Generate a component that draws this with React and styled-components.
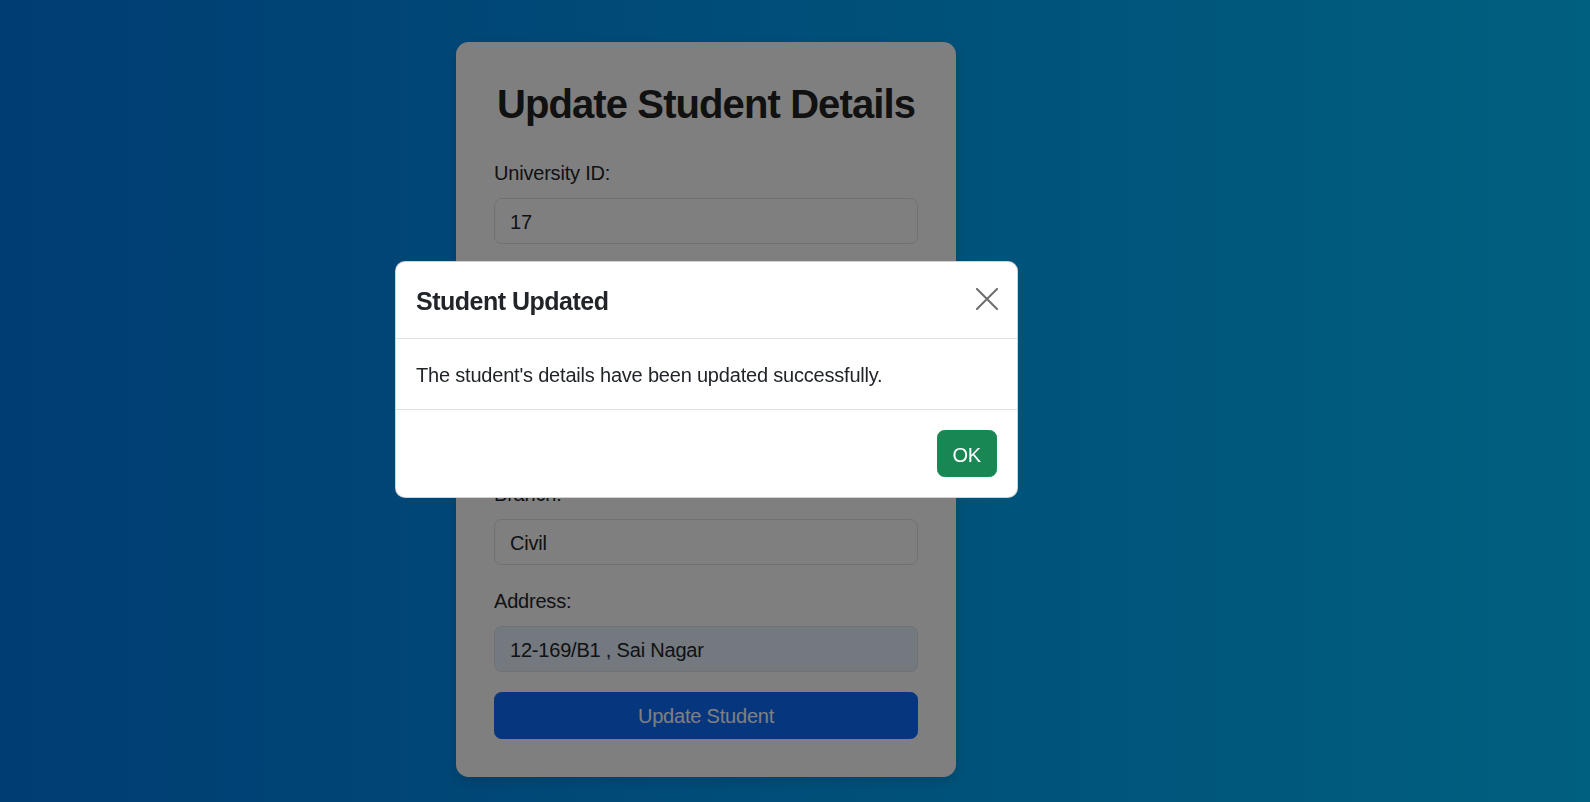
import React from "react";
import styled, { createGlobalStyle } from "styled-components";

const GlobalStyle = createGlobalStyle`
  html, body {
    margin: 0;
    padding: 0;
    height: 100%;
  }
  body {
    font-family: "Liberation Sans", Arial, sans-serif;
    color: #212529;
    letter-spacing: -0.2px;
  }
  * { box-sizing: border-box; }
`;

const Page = styled.div`
  min-height: 802px;
  background: linear-gradient(to right, #007ae6, #00c0ff);
  display: flex;
  justify-content: center;
  align-items: flex-start;
  padding: 42px 178px 0 0;
`;

const Card = styled.div`
  width: 500px;
  background: #ffffff;
  border-radius: 12.5px;
  padding: 37.5px 38px 38px;
  box-shadow: 0 4px 12px rgba(0, 0, 0, 0.15);
`;

const Heading = styled.h1`
  margin: 0 0 30px;
  font-size: 40px;
  line-height: 48px;
  font-weight: 700;
  letter-spacing: -0.9px;
  text-align: center;
  color: #222;
`;

const Form = styled.form`
  display: flex;
  flex-direction: column;
`;

const Field = styled.div`
  display: flex;
  flex-direction: column;
  margin-bottom: 21px;
`;

const Label = styled.label`
  font-size: 20px;
  line-height: 30px;
  margin-bottom: 10px;
`;

const Input = styled.input`
  height: 46px;
  padding: 9px 15px 5px;
  font-family: inherit;
  font-size: 20px;
  line-height: 30px;
  letter-spacing: -0.2px;
  color: #212529;
  background: ${(p) => (p.$autofill ? "#e8f0fe" : "#ffffff")};
  border: 1px solid #dee2e6;
  border-radius: 7.5px;
  outline: none;
`;

const SubmitButton = styled.button`
  height: 47px;
  margin-top: -0.5px;
  padding: 7px 15px;
  font-family: inherit;
  font-size: 20px;
  line-height: 30px;
  letter-spacing: -0.2px;
  color: #ffffff;
  background: #0d6efd;
  border: 1px solid #0d6efd;
  border-radius: 7.5px;
`;

const Backdrop = styled.div`
  position: fixed;
  inset: 0;
  background: rgba(0, 0, 0, 0.5);
  display: flex;
  justify-content: center;
  align-items: flex-start;
  padding: 260.5px 177px 0 0;
`;

const Dialog = styled.div`
  width: 623px;
  background: #ffffff;
  border: 1px solid rgba(0, 0, 0, 0.175);
  border-radius: 10px;
  display: flex;
  flex-direction: column;
`;

const DialogHeader = styled.div`
  display: flex;
  align-items: center;
  padding: 21px 20px 18px;
  border-bottom: 1px solid #dee2e6;
`;

const DialogTitle = styled.h5`
  margin: 0;
  font-size: 25px;
  line-height: 37.5px;
  font-weight: 700;
  letter-spacing: -0.5px;
  color: #212529;
`;

const CloseButton = styled.button`
  margin: -12px -10px -8px auto;
  width: 40px;
  height: 40px;
  padding: 0;
  border: 0;
  background: transparent;
  display: flex;
  align-items: center;
  justify-content: center;
  cursor: pointer;
`;

const DialogBody = styled.div`
  padding: 21px 20px 19px;
  font-size: 20px;
  line-height: 30px;
  color: #212529;
`;

const DialogFooter = styled.div`
  display: flex;
  justify-content: flex-end;
  padding: 15px;
  border-top: 1px solid #dee2e6;
`;

const OkButton = styled.button`
  margin: 5px;
  height: 47px;
  padding: 8px 15px 6px;
  font-family: inherit;
  font-size: 20px;
  line-height: 30px;
  letter-spacing: -0.2px;
  color: #ffffff;
  background: #198754;
  border: 1px solid #198754;
  border-radius: 7.5px;
`;

const fields = [
  { label: "University ID:", value: "17" },
  { label: "Name:", value: "Ravi Kumar" },
  { label: "Email:", value: "ravi.kumar@example.com" },
  { label: "Branch:", value: "Civil" },
  { label: "Address:", value: "12-169/B1 , Sai Nagar", autofill: true },
];

export default function App() {
  return (
    <>
      <GlobalStyle />
      <Page>
        <Card>
          <Heading>Update Student Details</Heading>
          <Form onSubmit={(e) => e.preventDefault()}>
            {fields.map((f) => (
              <Field key={f.label}>
                <Label>{f.label}</Label>
                <Input defaultValue={f.value} $autofill={f.autofill} />
              </Field>
            ))}
            <SubmitButton type="submit">Update Student</SubmitButton>
          </Form>
        </Card>
      </Page>
      <Backdrop>
        <Dialog>
          <DialogHeader>
            <DialogTitle>Student Updated</DialogTitle>
            <CloseButton aria-label="Close">
              <svg width="22" height="22" viewBox="0 0 22 22">
                <path
                  d="M1 1 L21 21 M21 1 L1 21"
                  stroke="#6e6e6e"
                  strokeWidth="2"
                  strokeLinecap="square"
                  fill="none"
                />
              </svg>
            </CloseButton>
          </DialogHeader>
          <DialogBody>
            The student's details have been updated successfully.
          </DialogBody>
          <DialogFooter>
            <OkButton>OK</OkButton>
          </DialogFooter>
        </Dialog>
      </Backdrop>
    </>
  );
}
